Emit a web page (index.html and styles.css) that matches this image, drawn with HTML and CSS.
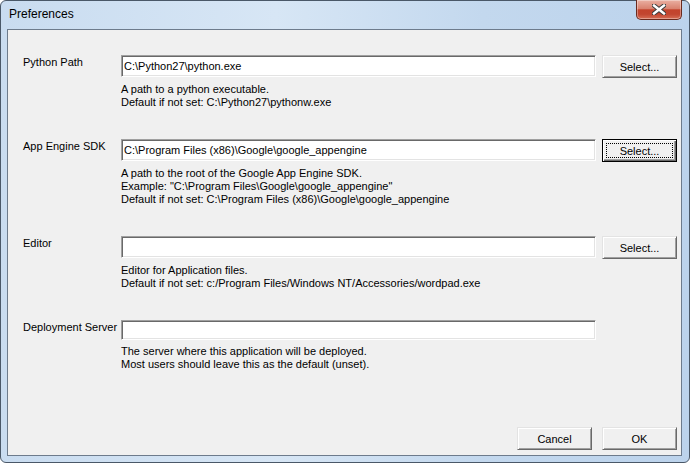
FILE: index.html
```html
<!DOCTYPE html>
<html lang="en">
  <head>
    <meta charset="UTF-8" />
    <title>Preferences</title>
    <link rel="stylesheet" href="styles.css">
  </head>
  <body>
    <div class="window">
      <div class="titlebar">
        <span class="title">Preferences</span>
        <button class="close" title="Close">
          <svg width="14" height="11" viewBox="0 0 14 11">
            <path d="M2 1.5 L12 9.5 M12 1.5 L2 9.5" stroke="#3c3c3c" stroke-width="4.4" stroke-linecap="square" />
            <path d="M2 1.5 L12 9.5 M12 1.5 L2 9.5" stroke="#fff" stroke-width="2.4" stroke-linecap="square" />
          </svg>
        </button>
      </div>

      <div class="panel">
        <div class="pref-row">
          <label class="pref-label" for="python-path">Python Path</label>
          <input type="text" id="python-path" class="pref-input" value="C:\Python27\python.exe" />
          <button class="btn">Select...</button>
          <div class="pref-help">
            A path to a python executable.<br />
            Default if not set: C:\Python27\pythonw.exe
          </div>
        </div>

        <div class="pref-row">
          <label class="pref-label" for="sdk-path">App Engine SDK</label>
          <input type="text" id="sdk-path" class="pref-input" value="C:\Program Files (x86)\Google\google_appengine" />
          <button class="btn btn-focus"><span>Select...</span></button>
          <div class="pref-help">
            A path to the root of the Google App Engine SDK.<br />
            Example: "C:\Program Files\Google\google_appengine"<br />
            Default if not set: C:\Program Files (x86)\Google\google_appengine
          </div>
        </div>

        <div class="pref-row">
          <label class="pref-label" for="editor">Editor</label>
          <input type="text" id="editor" class="pref-input" />
          <button class="btn">Select...</button>
          <div class="pref-help">
            Editor for Application files.<br />
            Default if not set: c:/Program Files/Windows NT/Accessories/wordpad.exe
          </div>
        </div>

        <div class="pref-row">
          <label class="pref-label" for="server">Deployment Server</label>
          <input type="text" id="server" class="pref-input pref-input-short" />
          <div class="pref-help">
            The server where this application will be deployed.<br />
            Most users should leave this as the default (unset).
          </div>
        </div>

        <div class="footer">
          <button class="btn btn-wide">Cancel</button>
          <button class="btn">OK</button>
        </div>
      </div>
    </div>
  </body>
</html>
```

FILE: styles.css
```css
body {
  margin: 0;
  background-color: #fff;
  font-family: "Liberation Sans", Arial, sans-serif;
  font-size: 11px;
  color: #000;
}

.window {
  box-sizing: border-box;
  width: 690px;
  height: 463px;
  display: flex;
  flex-direction: column;
  padding: 0 7px 6px 6px;
  border: 1px solid #4a5868;
  border-radius: 6px;
  background: linear-gradient(to right, #c9dcf0 0%, #d7e6f5 40%, #c3d8ee 70%, #bcd3ec 100%);
}

/* title bar */
.titlebar {
  height: 28px;
  display: flex;
  align-items: flex-start;
}

.title {
  padding: 6px 0 0 2px;
  font-size: 12px;
  color: #000;
}

.close {
  box-sizing: border-box;
  width: 46px;
  height: 20px;
  margin: -1px 0 0 auto;
  padding: 0;
  display: flex;
  align-items: center;
  justify-content: center;
  border: 1px solid #6a2a1e;
  border-top: none;
  border-radius: 0 0 5px 5px;
  background: linear-gradient(to bottom, #eab0a2 0%, #d9826f 45%, #c3432c 52%, #c24630 75%, #d66e55 100%);
  box-shadow: inset 0 0 0 1px rgba(255, 255, 255, 0.35);
}

/* client area */
.panel {
  flex: 1;
  display: flex;
  flex-direction: column;
  padding: 25px 0 5px 15px;
  border: 1px solid #6d7b8c;
  background-color: #f0f0f0;
}

.pref-row {
  display: grid;
  grid-template-columns: 98px 475px 80px;
  margin-bottom: 30px;
}

.pref-label {
  padding-top: 1px;
  line-height: 13px;
}

.pref-input {
  box-sizing: border-box;
  height: 22px;
  margin: 0;
  padding: 0 2px;
  font-family: inherit;
  font-size: 11px;
  color: #000;
  background-color: #fff;
  border-style: solid;
  border-width: 1px;
  border-color: #a0a0a0 #fff #fff #a0a0a0;
  box-shadow: inset 1px 1px 0 #696969, inset -1px -1px 0 #e3e3e3;
  outline: none;
}

.pref-input-short {
  height: 20px;
}

.pref-help {
  grid-column: 2 / 4;
  margin-top: 5px;
  line-height: 13px;
}

/* classic 3d buttons */
.btn {
  box-sizing: border-box;
  width: 75px;
  height: 23px;
  margin: 0 0 0 6px;
  padding: 0;
  font-family: inherit;
  font-size: 11px;
  color: #000;
  background-color: #f0f0f0;
  border-style: solid;
  border-width: 1px;
  border-color: #e3e3e3 #696969 #696969 #e3e3e3;
  box-shadow: inset 1px 1px 0 #fff, inset -1px -1px 0 #a0a0a0;
}

.btn-focus {
  border-color: #000;
  box-shadow: inset 1px 1px 0 #fff, inset -1px -1px 0 #696969, inset -2px -2px 0 #a0a0a0;
  padding: 3px;
}

.btn-focus span {
  display: block;
  height: 100%;
  box-sizing: border-box;
  padding-top: 1px;
  border: 1px dotted #000;
}

.btn-wide {
  width: 75px;
}

.footer {
  margin-top: auto;
  display: flex;
  justify-content: flex-end;
  padding-right: 4px;
}

.footer .btn + .btn {
  margin-left: 10px;
}
```
